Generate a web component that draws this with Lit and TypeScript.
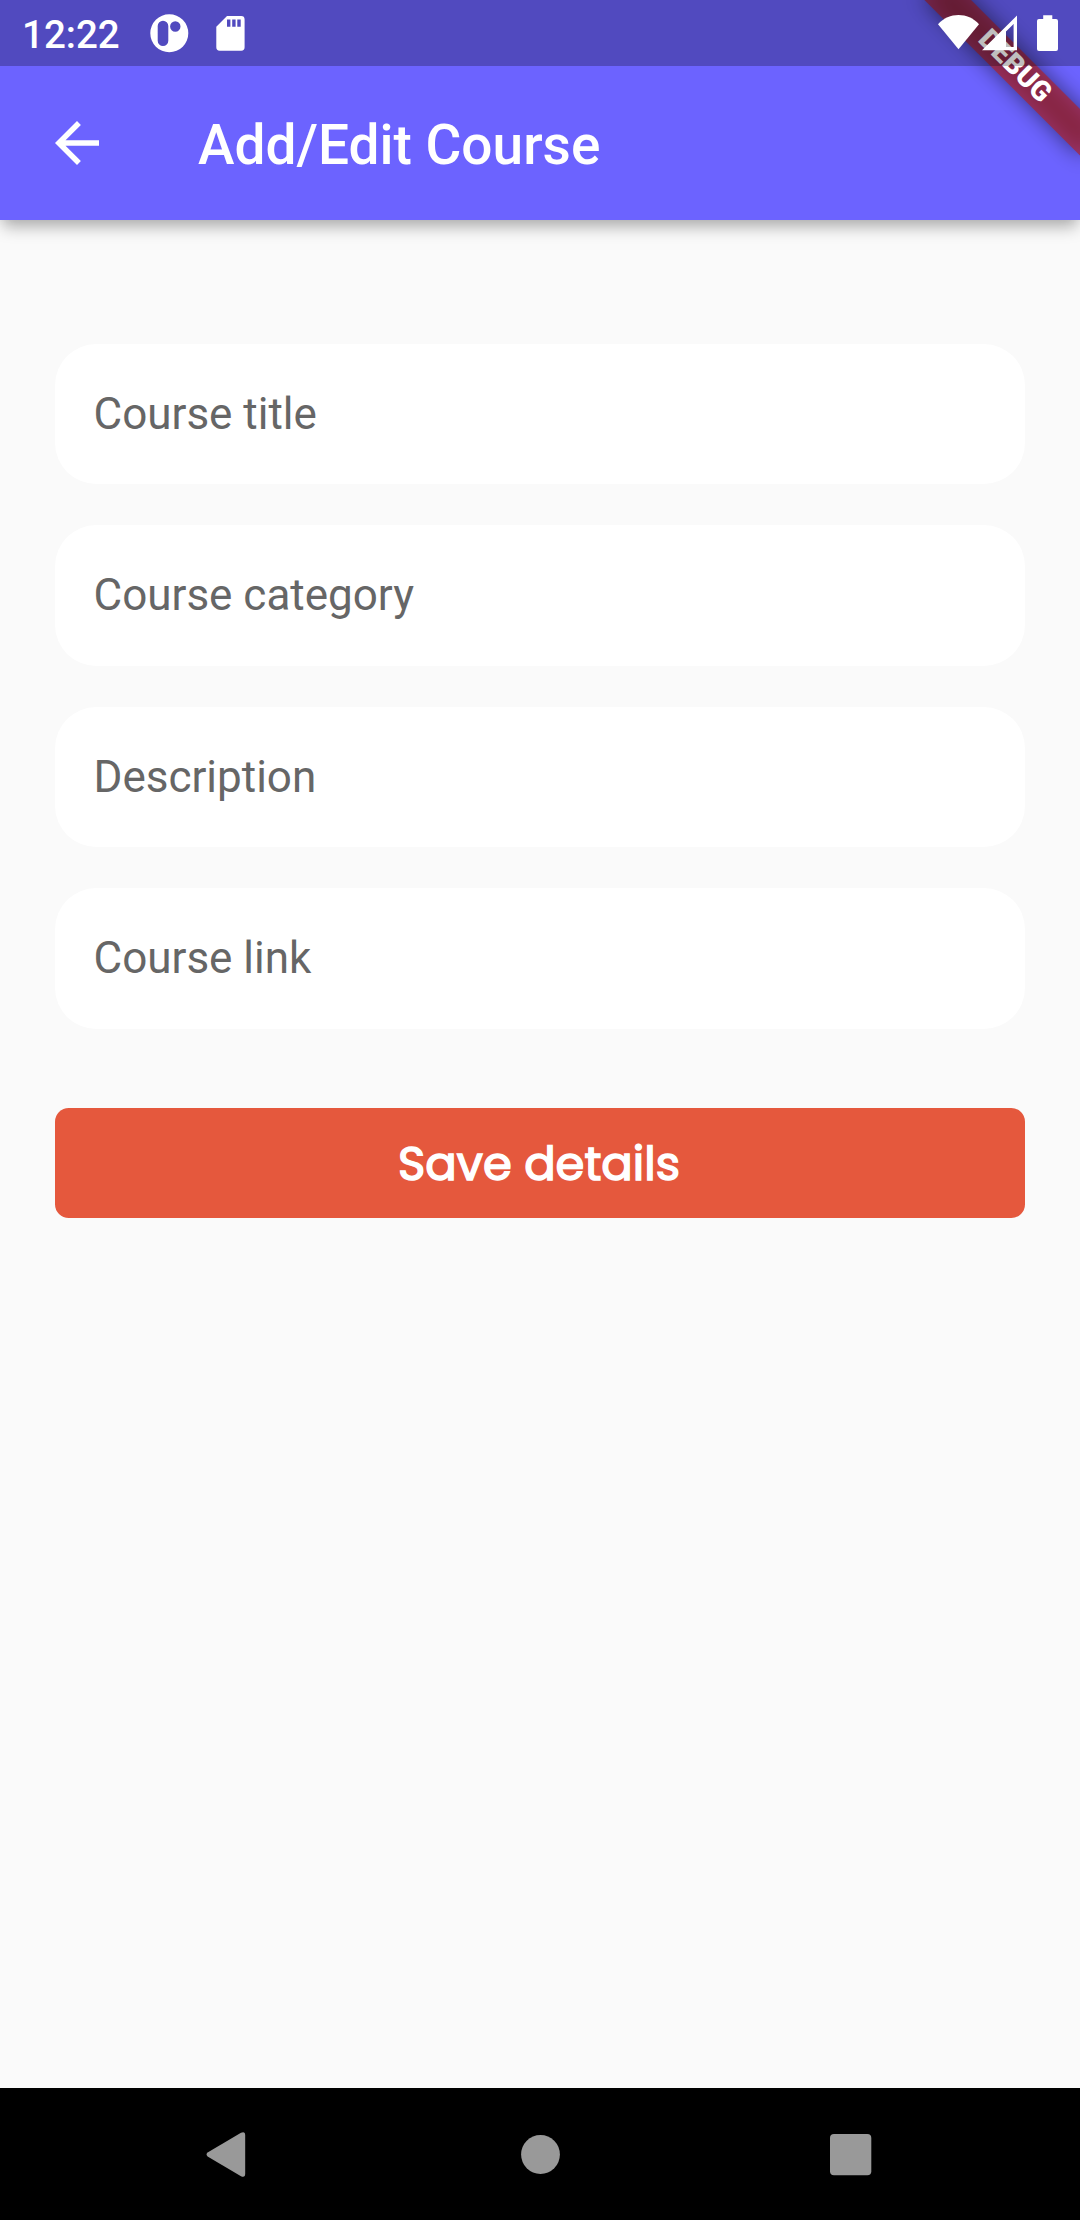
import { LitElement, html, css } from "lit";
import { customElement } from "lit/decorators.js";

@customElement("app-root")
export class AppRoot extends LitElement {
  static styles = css`
    :host {
      display: block;
      width: 1080px;
      height: 2220px;
      font-family: Roboto, "Liberation Sans", sans-serif;
    }
    .screen {
      position: relative;
      display: flex;
      flex-direction: column;
      width: 1080px;
      height: 2220px;
      overflow: hidden;
      background: #fafafa;
    }
    .top {
      display: flex;
      flex-direction: column;
      flex: none;
      background: #6c63ff;
      box-shadow: 0 10.5px 15px -3px rgba(0, 0, 0, 0.27), 0 1px 12px rgba(0, 0, 0, 0.08);
    }
    .status {
      position: relative;
      z-index: 3;
      display: flex;
      height: 66px;
      background: rgba(0, 0, 0, 0.25);
      color: #fff;
    }
    .time {
      padding-left: 22px;
      font-size: 38.5px;
      font-weight: 500;
      line-height: 70px;
      width: 126px;
      white-space: nowrap;
    }
    .left-icons {
      width: 110px;
      height: 66px;
    }
    .right-icons {
      width: 150px;
      height: 66px;
      margin-left: auto;
    }
    .bar {
      display: flex;
      align-items: center;
      height: 154px;
      color: #fff;
    }
    .back {
      width: 66px;
      height: 66px;
      margin-left: 44px;
      flex: none;
    }
    .title {
      margin: 0 0 0 88px;
      padding-top: 4px;
      font-size: 55px;
      font-weight: 500;
      line-height: 64px;
      white-space: nowrap;
    }
    .banner {
      position: absolute;
      z-index: 2;
      top: 0;
      right: 0;
    }
    .form {
      flex: 1;
      display: flex;
      flex-direction: column;
      gap: 41.25px;
      padding: 123.75px 55px 0;
    }
    .field {
      box-sizing: border-box;
      height: 140.25px;
      padding: 0 38.5px;
      border-radius: 41.25px;
      background: #fff;
      color: #666;
      font-size: 44px;
      line-height: 140px;
    }
    .save {
      height: 110px;
      margin-top: 38.5px;
      border: 0;
      border-radius: 13.75px;
      background: #e5583d;
      color: #fff;
      font-family: Poppins, Inter, sans-serif;
      font-size: 46.5px;
      font-weight: 400;
      -webkit-text-stroke: 1.5px #fff;
      padding: 2px 2px 0 0;
    }
    .nav {
      flex: none;
      height: 132px;
      background: #000;
    }
    svg {
      display: block;
    }
  `;

  private fields = ["Course title", "Course category", "Description", "Course link"];

  render() {
    return html`
      <div class="screen">
        <header class="top">
          <div class="status">
            <span class="time">12:22</span>
            <svg class="left-icons" viewBox="148 0 110 66" fill="#fff">
              <path
                fill-rule="evenodd"
                d="M169.3 14.2a19 19 0 1 1 0 38a19 19 0 1 1 0-38zM163 20.8a5.3 5.3 0 0 0-5.3 5.3v14.6a5.3 5.3 0 0 0 10.6 0v-14.6a5.3 5.3 0 0 0-5.3-5.3zM175.3 21.3a5.2 5.2 0 1 0 0 10.4a5.2 5.2 0 1 0 0-10.4z"
              />
              <path
                fill-rule="evenodd"
                d="M227 16h14.2a3.4 3.4 0 0 1 3.4 3.4v27.9a3.4 3.4 0 0 1-3.4 3.4h-21.5a3.4 3.4 0 0 1-3.4-3.4v-20.6zM227 19.5v7.2h3.4v-7.2zM232.2 19.5v7.2h3.4v-7.2zM237.3 19.5v7.2h3.4v-7.2z"
              />
            </svg>
            <svg class="right-icons" viewBox="930 0 150 66" fill="#fff">
              <path d="M938 24.3C949 12 968 12 979 24.3L958.5 49.3z" />
              <path fill-rule="evenodd" d="M1017 15.5v34.8h-35zM1013.6 24l-7.6 7.6v15.3h7.6z" />
              <path
                d="M1043.2 15.2h9.1v3.8h3.7a2 2 0 0 1 2 2v28a2 2 0 0 1-2 2h-17a2 2 0 0 1-2-2v-28a2 2 0 0 1 2-2h4.2z"
              />
            </svg>
          </div>
          <div class="bar">
            <svg class="back" viewBox="0 0 24 24" fill="#fff">
              <path d="M20 11H7.83l5.59-5.59L12 4l-8 8 8 8 1.41-1.41L7.83 13H20v-2z" />
            </svg>
            <h1 class="title">Add/Edit Course</h1>
          </div>
        </header>
        <svg class="banner" width="220" height="220" viewBox="-220 0 220 220">
          <defs>
            <filter id="soft" x="-30%" y="-150%" width="160%" height="400%">
              <feGaussianBlur stdDeviation="10.9" />
            </filter>
          </defs>
          <g transform="rotate(45)">
            <rect x="-110" y="77" width="220" height="33" fill="#000" fill-opacity="0.5" filter="url(#soft)" />
            <rect x="-110" y="77" width="220" height="33" fill="#b71c1c" fill-opacity="0.627" />
            <text x="0.8" y="101.6" fill="#fff" font-family="Roboto, sans-serif" font-size="28.05" font-weight="900" text-anchor="middle">DEBUG</text>
          </g>
        </svg>
        <main class="form">
          ${this.fields.map((label) => html`<div class="field">${label}</div>`)}
          <button class="save">Save details</button>
        </main>
        <footer class="nav">
          <svg width="1080" height="132" viewBox="0 2088 1080 132" fill="#999">
            <path
              d="M207.6 2152.6L241 2132.8Q245.2 2131 245.2 2135.5V2173.5Q245.2 2178 241 2176.2L207.6 2156.4Q205.4 2154.5 207.6 2152.6z"
            />
            <circle cx="540.5" cy="2154.5" r="19.4" />
            <rect x="830" y="2134" width="41.3" height="41.3" rx="4" />
          </svg>
        </footer>
      </div>
    `;
  }
}
